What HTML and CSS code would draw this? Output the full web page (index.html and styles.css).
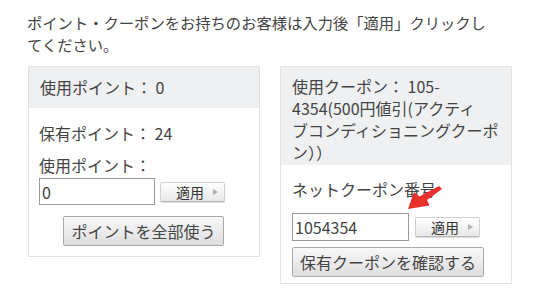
FILE: index.html
```html
<!DOCTYPE html>
<html lang="ja">
<head>
<meta charset="utf-8">
<link rel="stylesheet" href="styles.css">
</head>
<body>
<p class="intro">ポイント・クーポンをお持ちのお客様は入力後「適用」クリックしてください。</p>
<div class="panels">
  <div class="panel panel-left">
    <div class="panel-head">使用ポイント： 0</div>
    <div class="panel-body">
      <div class="line first">保有ポイント： 24</div>
      <div class="line second">使用ポイント：</div>
      <div class="field-row">
        <input class="field" type="text" value="0">
        <button class="apply" type="button"><span>適用</span><span class="tri"></span></button>
      </div>
      <div class="center-row">
        <button class="big" type="button">ポイントを全部使う</button>
      </div>
    </div>
  </div>
  <div class="panel panel-right">
    <div class="panel-head">使用クーポン： 105-<br>4354(500円値引(アクティ<br>ブコンディショニングクーポ<br>ン））</div>
    <div class="panel-body body-right">
      <div class="line net">ネットクーポン番号</div>
      <div class="field-row row-right">
        <input class="field field-right" type="text" value="1054354">
        <button class="apply" type="button"><span>適用</span><span class="tri"></span></button>
      </div>
      <button class="big big-right" type="button">保有クーポンを確認する</button>
    </div>
    <svg class="arrow" width="40" height="30" viewBox="0 0 40 30" aria-hidden="true">
      <path d="M33 2 L36 5 L21 16 L23.5 21.5 L2 25 L8 8 L13.5 12.5 Z" fill="#e8302c"/>
    </svg>
  </div>
</div>
</body>
</html>
```

FILE: styles.css
```css
html, body {
  margin: 0;
  padding: 0;
  background: #ffffff;
}
body {
  padding: 11px 0 0 27px;
  font-family: "Noto Sans CJK JP", "Noto Sans", sans-serif;
  color: #444444;
}
.intro {
  margin: 0;
  width: 462px;
  font-size: 15.3px;
  line-height: 22px;
}
.panels {
  display: flex;
  align-items: flex-start;
  gap: 20px;
  margin-top: 11px;
  margin-left: 1px;
}
.panel {
  position: relative;
  width: 232px;
  box-sizing: border-box;
  border: 1px solid #e3e3e3;
  background: #fff;
}
.panel-head {
  background: #eef0f1;
  padding: 9px 10px 9px 11px;
  font-size: 16px;
  line-height: 23px;
}
.panel-right .panel-head {
  padding: 8px 6px 2px 11px;
  line-height: 22px;
}
.panel-body {
  padding: 14px 11px 10px 10px;
  font-size: 16px;
}
.line {
  line-height: 23px;
}
.second {
  margin-top: 9px;
}
.field-row {
  display: flex;
  align-items: center;
  gap: 5px;
  margin-top: 1px;
}
.field {
  width: 116px;
  height: 27px;
  box-sizing: border-box;
  border: 1px solid #9a9a9a;
  padding: 0 2px;
  margin: 0;
  font-family: "Noto Sans CJK JP", "Noto Sans", sans-serif;
  font-size: 16px;
  color: #444;
  background: #fff;
}
.apply {
  width: 65px;
  height: 20px;
  box-sizing: border-box;
  display: flex;
  align-items: center;
  justify-content: flex-end;
  gap: 9px;
  padding: 0 6px 0 0;
  margin: 0;
  border: 1px solid #d0d0d0;
  border-bottom-color: #b8b8b8;
  border-radius: 2px;
  background: linear-gradient(#ffffff, #e8e8e8);
  box-shadow: 0 1px 1px rgba(0,0,0,0.15);
  font-family: "Noto Sans CJK JP", sans-serif;
  font-size: 14px;
  line-height: 18px;
  color: #333;
}
.tri {
  width: 0;
  height: 0;
  border-top: 3.5px solid transparent;
  border-bottom: 3.5px solid transparent;
  border-left: 5px solid #b0b0b0;
}
.center-row {
  display: flex;
  justify-content: center;
  margin-top: 11px;
}
.big {
  height: 30px;
  box-sizing: border-box;
  padding: 0 7px;
  margin: 0;
  border: 1px solid #a8a8a8;
  border-radius: 2px;
  background: linear-gradient(#f8f8f8, #dedede);
  font-family: "Noto Sans CJK JP", sans-serif;
  font-size: 16px;
  line-height: 28px;
  color: #444;
}
.body-right {
  padding: 13px 10px 6px 11px;
}
.row-right {
  margin-top: 12px;
  gap: 6px;
}
.field-right {
  width: 117px;
  height: 28px;
}
.big-right {
  display: block;
  margin-top: 6px;
}
.arrow {
  position: absolute;
  left: 125px;
  top: 117px;
}
```
